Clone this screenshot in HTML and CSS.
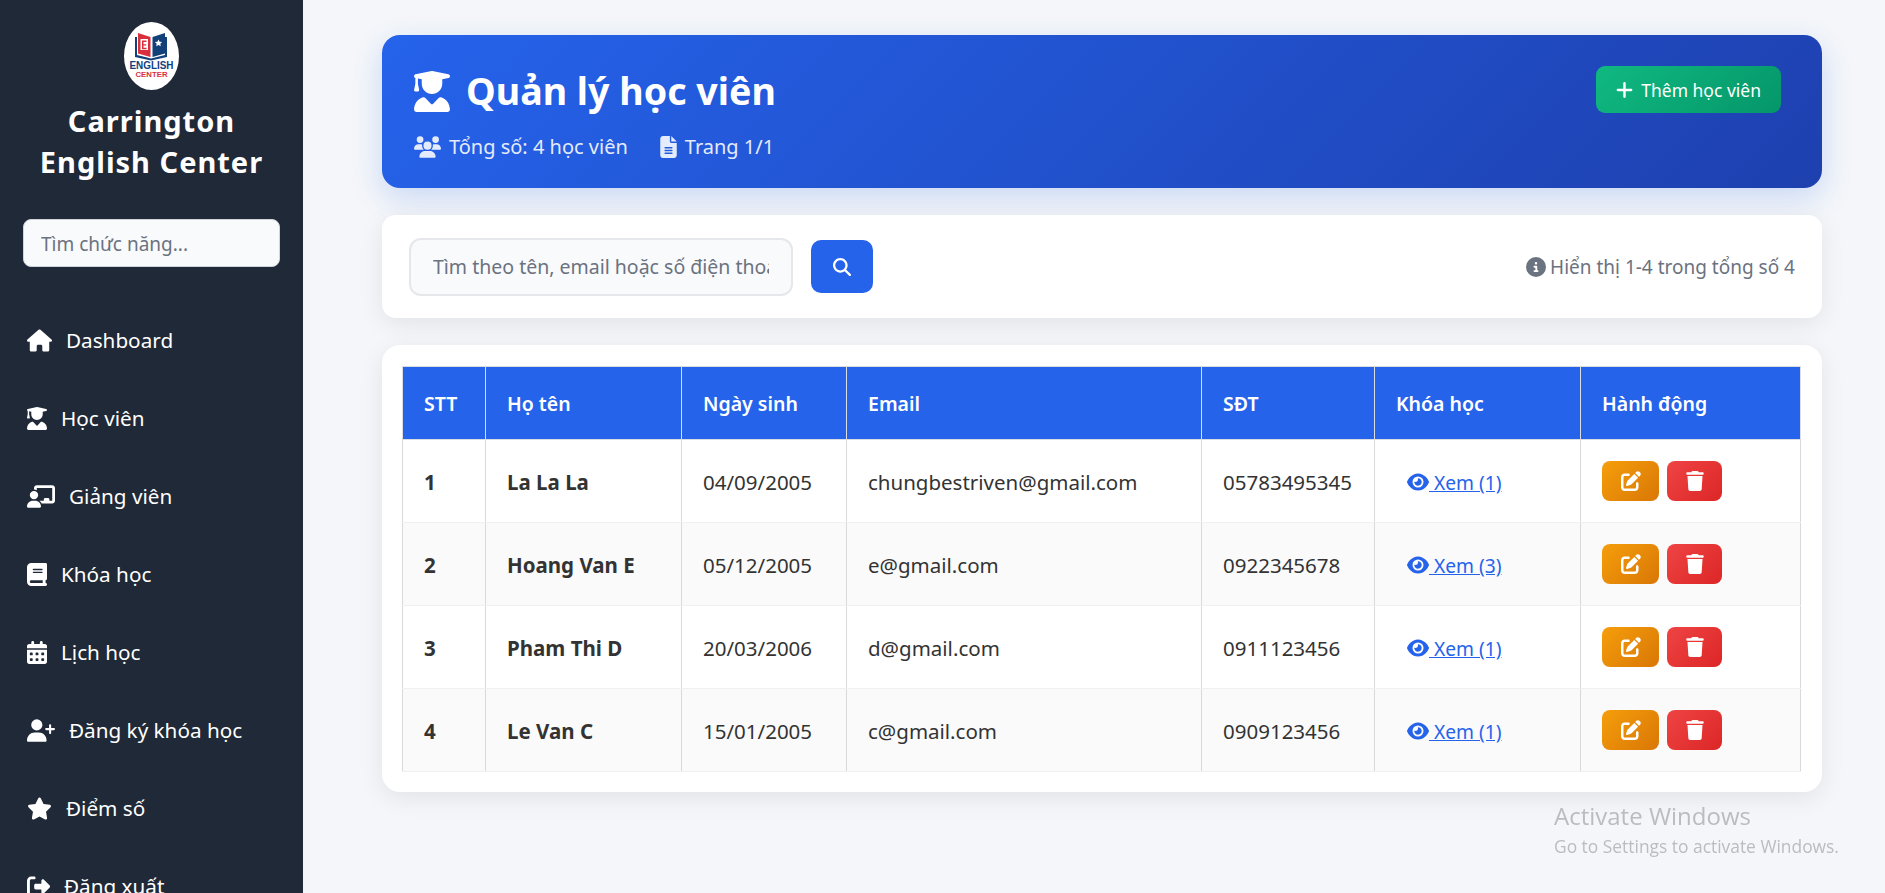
FILE: index.html
```html
<!DOCTYPE html>
<html lang="vi">
<head>
  <meta charset="UTF-8" />
  <title>Quản lý học viên</title>
  <link rel="stylesheet" href="styles.css">
</head>
<body>
  <svg class="icon-defs">
    <symbol id="i-home" viewBox="0 0 576 512"><path d="M575.8 255.5c0 18-15 32.100-32 32.100h-32l.7 160.200c0 2.700-.2 5.400-.5 8.100V472c0 22.100-17.900 40-40 40H456c-1.100 0-2.200 0-3.300-.1c-1.400 .1-2.800 .1-4.200 .1H416 392c-22.100 0-40-17.900-40-40V448 384c0-17.700-14.300-32-32-32H256c-17.700 0-32 14.300-32 32v64 24c0 22.100-17.900 40-40 40H160 128.100c-1.500 0-3-.1-4.500-.2c-1.200 .1-2.400 .2-3.600 .2H104c-22.100 0-40-17.900-40-40V360c0-.9 0-1.900 .1-2.800V287.600H32c-18 0-32-14-32-32.100c0-9 3-17 10-24L266.400 8c7-7 15-8 22-8s15 2 21 7L564.800 231.500c8 7 12 15 11 24z"/></symbol>
    <symbol id="i-grad" viewBox="0 0 448 512"><path d="M219.300 .5c3.100-.6 6.300-.6 9.400 0l200 40C439.900 42.700 448 52.600 448 64s-8.100 21.300-19.300 23.500L352 102.900V160c0 70.700-57.300 128-128 128s-128-57.300-128-128V102.900L48 93.300v65.100l15.700 78.400c.9 4.700-.3 9.600-3.300 13.300s-7.600 5.900-12.400 5.900H16c-4.800 0-9.300-2.100-12.400-5.900s-4.300-8.600-3.300-13.300L16 158.400V86.600C6.500 83.300 0 74.300 0 64C0 52.600 8.100 42.700 19.300 40.500l200-40zM111.900 327.700c10.500-3.400 21.800 .4 29.400 8.500l71 75.500c6.300 6.700 17 6.700 23.300 0l71-75.500c7.600-8.100 18.900-11.900 29.400-8.500C401 348.600 448 409.400 448 481.300c0 17-13.800 30.700-30.700 30.700H30.700C13.800 512 0 498.200 0 481.300c0-71.900 47-132.700 111.900-153.600z"/></symbol>
    <symbol id="i-teacher" viewBox="0 0 640 512"><path d="M160 64c0-35.300 28.700-64 64-64H576c35.300 0 64 28.700 64 64V352c0 35.300-28.700 64-64 64H336.800c-11.800-25.500-29.900-47.500-52.400-64H384V320c0-17.700 14.300-32 32-32h64c17.700 0 32 14.300 32 32v32h64V64L224 64v49.100C205.200 102.200 183.300 96 160 96V64zm0 64a96 96 0 1 1 0 192 96 96 0 1 1 0-192zM133.300 352h53.300C260.300 352 320 411.700 320 485.300c0 14.700-11.900 26.700-26.700 26.700H26.700C11.900 512 0 500.100 0 485.300C0 411.700 59.700 352 133.300 352z"/></symbol>
    <symbol id="i-book" viewBox="0 0 448 512"><path d="M96 0C43 0 0 43 0 96V416c0 53 43 96 96 96H384h32c17.700 0 32-14.300 32-32s-14.300-32-32-32V384c17.700 0 32-14.300 32-32V32c0-17.700-14.300-32-32-32H384 96zm0 384H352v64H96c-17.700 0-32-14.300-32-32s14.300-32 32-32zm32-240c0-8.800 7.200-16 16-16H336c8.800 0 16 7.200 16 16s-7.200 16-16 16H144c-8.800 0-16-7.200-16-16zm16 48H336c8.800 0 16 7.200 16 16s-7.200 16-16 16H144c-8.800 0-16-7.200-16-16s7.200-16 16-16z"/></symbol>
    <symbol id="i-calendar" viewBox="0 0 448 512"><path d="M128 0c17.700 0 32 14.300 32 32V64H288V32c0-17.700 14.300-32 32-32s32 14.300 32 32V64h48c26.500 0 48 21.500 48 48v48H0V112C0 85.500 21.500 64 48 64H96V32c0-17.700 14.300-32 32-32zM0 192H448V464c0 26.500-21.500 48-48 48H48c-26.500 0-48-21.500-48-48V192zm64 80v32c0 8.800 7.200 16 16 16h32c8.800 0 16-7.200 16-16V272c0-8.800-7.200-16-16-16H80c-8.800 0-16 7.200-16 16zm128 0v32c0 8.800 7.200 16 16 16h32c8.800 0 16-7.200 16-16V272c0-8.800-7.200-16-16-16H208c-8.800 0-16 7.200-16 16zm144-16c-8.800 0-16 7.200-16 16v32c0 8.800 7.200 16 16 16h32c8.800 0 16-7.200 16-16V272c0-8.800-7.200-16-16-16H336zM64 400v32c0 8.800 7.200 16 16 16h32c8.800 0 16-7.200 16-16V400c0-8.800-7.200-16-16-16H80c-8.800 0-16 7.200-16 16zm144-16c-8.800 0-16 7.200-16 16v32c0 8.800 7.200 16 16 16h32c8.800 0 16-7.200 16-16V400c0-8.800-7.200-16-16-16H208zm112 16v32c0 8.800 7.200 16 16 16h32c8.800 0 16-7.200 16-16V400c0-8.800-7.200-16-16-16H336c-8.800 0-16 7.200-16 16z"/></symbol>
    <symbol id="i-user-plus" viewBox="0 0 640 512"><path d="M96 128a128 128 0 1 1 256 0A128 128 0 1 1 96 128zM0 482.300C0 383.800 79.800 304 178.300 304h91.400C368.200 304 448 383.800 448 482.300c0 16.400-13.300 29.700-29.700 29.700H29.700C13.300 512 0 498.700 0 482.300zM504 312V248H440c-13.300 0-24-10.700-24-24s10.700-24 24-24h64V136c0-13.300 10.700-24 24-24s24 10.700 24 24v64h64c13.300 0 24 10.700 24 24s-10.700 24-24 24H552v64c0 13.300-10.700 24-24 24s-24-10.700-24-24z"/></symbol>
    <symbol id="i-star" viewBox="0 0 576 512"><path d="M316.900 18C311.600 7 300.400 0 288.100 0s-23.400 7-28.800 18L195 150.300 51.400 171.500c-12 1.800-22 10.200-25.700 21.700s-.7 24.200 7.900 32.700L137.800 329 113.200 474.700c-2 12 3 24.200 12.900 31.300s23 8 33.800 2.300l128.300-68.500 128.300 68.500c10.800 5.700 23.900 4.900 33.800-2.300s14.900-19.300 12.900-31.300L438.500 329 542.700 225.900c8.600-8.500 11.700-21.200 7.900-32.700s-13.700-19.900-25.700-21.700L381.200 150.300 316.900 18z"/></symbol>
    <symbol id="i-logout" viewBox="0 0 512 512"><path d="M377.900 105.900L500.700 228.700c7.200 7.200 11.300 17.100 11.300 27.300s-4.100 20.100-11.300 27.300L377.900 406.100c-6.400 6.400-15 9.900-24 9.900c-18.700 0-33.900-15.200-33.900-33.900l0-62.100-128 0c-17.700 0-32-14.300-32-32l0-64c0-17.700 14.300-32 32-32l128 0 0-62.100c0-18.700 15.200-33.900 33.900-33.900c9 0 17.600 3.600 24 9.900zM160 96L96 96c-17.700 0-32 14.300-32 32l0 256c0 17.700 14.300 32 32 32l64 0c17.700 0 32 14.300 32 32s-14.300 32-32 32l-64 0c-53 0-96-43-96-96L0 128C0 75 43 32 96 32l64 0c17.700 0 32 14.300 32 32s-14.300 32-32 32z"/></symbol>
    <symbol id="i-users" viewBox="0 0 640 512"><path d="M144 0a80 80 0 1 1 0 160A80 80 0 1 1 144 0zM512 0a80 80 0 1 1 0 160A80 80 0 1 1 512 0zM0 298.700C0 239.800 47.800 192 106.700 192h42.700c15.900 0 31 3.500 44.600 9.700c-1.300 7.200-1.900 14.700-1.900 22.300c0 38.200 16.800 72.500 43.300 96c-.2 0-.4 0-.7 0H21.300C9.600 320 0 310.400 0 298.700zM405.300 320c-.2 0-.4 0-.7 0c26.600-23.500 43.300-57.800 43.300-96c0-7.600-.7-15-1.900-22.300c13.600-6.300 28.700-9.700 44.600-9.700h42.700C592.200 192 640 239.800 640 298.700c0 11.800-9.600 21.300-21.300 21.300H405.300zM224 224a96 96 0 1 1 192 0 96 96 0 1 1 -192 0zM128 485.300C128 411.700 187.700 352 261.300 352H378.700C452.300 352 512 411.700 512 485.300c0 14.700-11.900 26.700-26.700 26.700H154.700c-14.700 0-26.700-11.900-26.700-26.700z"/></symbol>
    <symbol id="i-file" viewBox="0 0 384 512"><path d="M64 0C28.700 0 0 28.700 0 64V448c0 35.300 28.700 64 64 64H320c35.300 0 64-28.700 64-64V160H256c-17.700 0-32-14.300-32-32V0H64zM256 0V128H384L256 0zM112 256H272c8.800 0 16 7.200 16 16s-7.200 16-16 16H112c-8.800 0-16-7.200-16-16s7.200-16 16-16zm0 64H272c8.800 0 16 7.200 16 16s-7.200 16-16 16H112c-8.800 0-16-7.200-16-16s7.200-16 16-16zm0 64H272c8.800 0 16 7.200 16 16s-7.200 16-16 16H112c-8.800 0-16-7.200-16-16s7.200-16 16-16z"/></symbol>
    <symbol id="i-plus" viewBox="0 0 448 512"><path d="M256 80c0-17.700-14.300-32-32-32s-32 14.300-32 32V224H48c-17.700 0-32 14.300-32 32s14.300 32 32 32H192V432c0 17.700 14.300 32 32 32s32-14.300 32-32V288H400c17.700 0 32-14.300 32-32s-14.300-32-32-32H256V80z"/></symbol>
    <symbol id="i-search" viewBox="0 0 512 512"><path d="M416 208c0 45.900-14.900 88.300-40 122.700L502.600 457.400c12.500 12.500 12.500 32.800 0 45.300s-32.800 12.500-45.300 0L330.700 376c-34.400 25.200-76.800 40-122.700 40C93.100 416 0 322.900 0 208S93.100 0 208 0S416 93.100 416 208zM208 352a144 144 0 1 0 0-288 144 144 0 1 0 0 288z"/></symbol>
    <symbol id="i-info" viewBox="0 0 512 512"><path d="M256 512A256 256 0 1 0 256 0a256 256 0 1 0 0 512zM216 336h24V272H216c-13.300 0-24-10.700-24-24s10.700-24 24-24h48c13.300 0 24 10.700 24 24v88h8c13.300 0 24 10.700 24 24s-10.700 24-24 24H216c-13.300 0-24-10.700-24-24s10.700-24 24-24zm40-208a32 32 0 1 1 0 64 32 32 0 1 1 0-64z"/></symbol>
    <symbol id="i-eye" viewBox="0 0 576 512"><path d="M288 32c-80.800 0-145.500 36.800-192.600 80.600C48.600 156 17.300 208 2.500 243.700c-3.300 7.900-3.300 16.700 0 24.600C17.300 304 48.600 356 95.400 399.400C142.500 443.200 207.200 480 288 480s145.500-36.800 192.600-80.600c46.800-43.500 78.100-95.400 93-131.100c3.300-7.900 3.300-16.700 0-24.600c-14.900-35.700-46.200-87.700-93-131.100C433.500 68.800 368.800 32 288 32zM144 256a144 144 0 1 1 288 0 144 144 0 1 1 -288 0zm144-64c0 35.300-28.700 64-64 64c-7.100 0-13.900-1.200-20.300-3.300c-5.500-1.800-11.900 1.600-11.700 7.400c.3 6.900 1.300 13.800 3.200 20.700c13.700 51.200 66.400 81.600 117.600 67.900s81.600-66.400 67.900-117.600c-11.100-41.500-47.800-69.400-88.600-71.100c-5.800-.2-9.200 6.100-7.400 11.700c2.100 6.400 3.300 13.200 3.300 20.300z"/></symbol>
    <symbol id="i-edit" viewBox="0 0 512 512"><path d="M471.600 21.700c-21.900-21.900-57.300-21.900-79.200 0L362.300 51.700l97.900 97.900 30.100-30.100c21.900-21.900 21.900-57.300 0-79.200L471.600 21.700zm-299.200 220c-6.100 6.100-10.800 13.600-13.500 21.900l-29.600 88.800c-2.900 8.600-.6 18.100 5.800 24.600s15.900 8.700 24.600 5.800l88.800-29.600c8.200-2.700 15.700-7.400 21.900-13.500L437.700 172.300 339.700 74.300 172.400 241.700zM96 64C43 64 0 107 0 160V416c0 53 43 96 96 96H352c53 0 96-43 96-96V320c0-17.700-14.300-32-32-32s-32 14.300-32 32v96c0 17.700-14.300 32-32 32H96c-17.700 0-32-14.300-32-32V160c0-17.700 14.300-32 32-32h96c17.700 0 32-14.300 32-32s-14.300-32-32-32H96z"/></symbol>
    <symbol id="i-trash" viewBox="0 0 448 512"><path d="M135.200 17.700L128 32H32C14.300 32 0 46.300 0 64S14.300 96 32 96H416c17.700 0 32-14.300 32-32s-14.300-32-32-32H320l-7.200-14.300C307.400 6.800 296.300 0 284.200 0H163.800c-12.100 0-23.200 6.800-28.600 17.700zM416 128H32L53.200 467c1.600 25.300 22.600 45 47.900 45H346.900c25.300 0 46.300-19.700 47.900-45L416 128z"/></symbol>
  </svg>

  <aside class="sidebar">
    <div class="brand">
      <svg class="logo" viewBox="0 0 55 68">
        <ellipse cx="27.500" cy="34" rx="27.500" ry="34" fill="#fff"/>
        <path d="M11 15h2v18l14 3.500L41 33V15h2v20l-16 3.500L11 35z" fill="#12417a"/>
        <path d="M14 11l12.500 4v20L14 31.500z" fill="#d9303e"/>
        <path d="M41 11l-12.500 4v20L41 31.500z" fill="#12417a"/>
        <rect x="16.500" y="17" width="7.500" height="11" fill="#fff"/>
        <path d="M18 18.500h4.500v1.500h-3v2.200h2.700v1.400h-2.700v2.200h3v1.400H18z" fill="#d9303e"/>
        <path d="M34.500 17.500l1.100 2.300 2.500.3-1.800 1.700.5 2.500-2.300-1.200-2.300 1.200.5-2.500-1.800-1.700 2.500-.3z" fill="#fff"/>
        <text class="logo-line1" x="27.500" y="46.500" text-anchor="middle" textLength="44" lengthAdjust="spacingAndGlyphs">ENGLISH</text>
        <text class="logo-line2" x="27.500" y="55" text-anchor="middle" textLength="32" lengthAdjust="spacingAndGlyphs">CENTER</text>
      </svg>
      <h2 class="brand-name">Carrington<br>English Center</h2>
    </div>
    <input class="side-search" type="text" placeholder="Tìm chức năng...">
    <nav class="side-nav">
      <a class="nav-item" href="#"><svg class="nav-icon"><use href="#i-home"/></svg>Dashboard</a>
      <a class="nav-item" href="#"><svg class="nav-icon narrow"><use href="#i-grad"/></svg>Học viên</a>
      <a class="nav-item" href="#"><svg class="nav-icon wide"><use href="#i-teacher"/></svg>Giảng viên</a>
      <a class="nav-item" href="#"><svg class="nav-icon narrow"><use href="#i-book"/></svg>Khóa học</a>
      <a class="nav-item" href="#"><svg class="nav-icon narrow"><use href="#i-calendar"/></svg>Lịch học</a>
      <a class="nav-item" href="#"><svg class="nav-icon wide"><use href="#i-user-plus"/></svg>Đăng ký khóa học</a>
      <a class="nav-item" href="#"><svg class="nav-icon"><use href="#i-star"/></svg>Điểm số</a>
      <a class="nav-item" href="#"><svg class="nav-icon square"><use href="#i-logout"/></svg>Đăng xuất</a>
    </nav>
  </aside>

  <main class="content">
    <header class="page-head">
      <div>
        <h1 class="page-title"><svg class="title-icon"><use href="#i-grad"/></svg>Quản lý học viên</h1>
        <div class="page-meta">
          <span class="meta-item"><svg class="meta-users"><use href="#i-users"/></svg>Tổng số: 4 học viên</span>
          <span class="meta-item"><svg class="meta-file"><use href="#i-file"/></svg>Trang 1/1</span>
        </div>
      </div>
      <a class="btn-add" href="#"><svg class="plus-icon"><use href="#i-plus"/></svg>Thêm học viên</a>
    </header>

    <section class="search-card">
      <form class="search-form">
        <input class="search-input" type="text" placeholder="Tìm theo tên, email hoặc số điện thoại...">
        <button class="search-btn" type="button"><svg class="search-icon"><use href="#i-search"/></svg></button>
      </form>
      <div class="result-info"><svg class="info-icon"><use href="#i-info"/></svg>Hiển thị 1-4 trong tổng số 4</div>
    </section>

    <section class="table-card">
      <table class="students">
        <colgroup>
          <col class="col-stt"><col class="col-name"><col class="col-dob"><col class="col-email"><col class="col-phone"><col class="col-course"><col class="col-action">
        </colgroup>
        <thead>
          <tr><th>STT</th><th>Họ tên</th><th>Ngày sinh</th><th>Email</th><th>SĐT</th><th>Khóa học</th><th>Hành động</th></tr>
        </thead>
        <tbody>
          <tr>
            <td class="strong">1</td><td class="strong">La La La</td><td>04/09/2005</td><td>chungbestriven@gmail.com</td><td>05783495345</td>
            <td><a class="view-link" href="#"><svg class="eye-icon"><use href="#i-eye"/></svg> Xem (1)</a></td>
            <td><div class="actions"><a class="btn-edit" href="#"><svg class="act-icon"><use href="#i-edit"/></svg></a><a class="btn-del" href="#"><svg class="act-icon"><use href="#i-trash"/></svg></a></div></td>
          </tr>
          <tr>
            <td class="strong">2</td><td class="strong">Hoang Van E</td><td>05/12/2005</td><td>e@gmail.com</td><td>0922345678</td>
            <td><a class="view-link" href="#"><svg class="eye-icon"><use href="#i-eye"/></svg> Xem (3)</a></td>
            <td><div class="actions"><a class="btn-edit" href="#"><svg class="act-icon"><use href="#i-edit"/></svg></a><a class="btn-del" href="#"><svg class="act-icon"><use href="#i-trash"/></svg></a></div></td>
          </tr>
          <tr>
            <td class="strong">3</td><td class="strong">Pham Thi D</td><td>20/03/2006</td><td>d@gmail.com</td><td>0911123456</td>
            <td><a class="view-link" href="#"><svg class="eye-icon"><use href="#i-eye"/></svg> Xem (1)</a></td>
            <td><div class="actions"><a class="btn-edit" href="#"><svg class="act-icon"><use href="#i-edit"/></svg></a><a class="btn-del" href="#"><svg class="act-icon"><use href="#i-trash"/></svg></a></div></td>
          </tr>
          <tr>
            <td class="strong">4</td><td class="strong">Le Van C</td><td>15/01/2005</td><td>c@gmail.com</td><td>0909123456</td>
            <td><a class="view-link" href="#"><svg class="eye-icon"><use href="#i-eye"/></svg> Xem (1)</a></td>
            <td><div class="actions"><a class="btn-edit" href="#"><svg class="act-icon"><use href="#i-edit"/></svg></a><a class="btn-del" href="#"><svg class="act-icon"><use href="#i-trash"/></svg></a></div></td>
          </tr>
        </tbody>
      </table>
    </section>
  </main>

  <div class="activate">
    <div class="activate-title">Activate Windows</div>
    <div class="activate-sub">Go to Settings to activate Windows.</div>
  </div>
</body>
</html>
```

FILE: styles.css
```css
* { box-sizing: border-box; }

html, body {
  height: 100%;
}

body {
  margin: 0;
  overflow: hidden;
  display: flex;
  background-color: #f4f6f9;
  color: #333;
  font-family: "Noto Sans", "Open Sans", sans-serif;
}

a { text-decoration: none; }

svg { fill: currentColor; flex: none; }

.icon-defs { display: none; }

/* sidebar */
.sidebar {
  width: 303px;
  height: 100%;
  flex: none;
  overflow: hidden;
  padding-top: 22px;
  background-color: #1f2937;
  color: #fff;
}

.brand {
  display: flex;
  flex-direction: column;
  align-items: center;
}

.logo {
  width: 55px;
  height: 68px;
}

.logo-line1 {
  font-family: "Liberation Sans", sans-serif;
  font-weight: 700;
  font-size: 11px;
  fill: #12417a;
}

.logo-line2 {
  font-family: "Liberation Sans", sans-serif;
  font-weight: 700;
  font-size: 8px;
  fill: #d9303e;
}

.brand-name {
  margin: 10px 0 0;
  font-size: 29px;
  line-height: 41px;
  font-weight: 700;
  letter-spacing: 1px;
  text-align: center;
}

.side-search {
  display: block;
  width: 257px;
  height: 48px;
  margin: 37px 0 0 23px;
  padding: 2px 17px 0;
  border: 1px solid #d1d5db;
  border-radius: 8px;
  background-color: #f9fafc;
  font: 19px "Noto Sans", sans-serif;
}

.side-search::placeholder { color: #6b7280; opacity: 1; }

.side-nav {
  margin-top: 34px;
  padding-left: 27px;
}

.nav-item {
  display: flex;
  align-items: center;
  gap: 14px;
  height: 78px;
  color: #fff;
  font-size: 20.7px;
}

.nav-icon { width: 25px; height: 23px; }
.nav-icon.narrow { width: 20px; }
.nav-icon.wide { width: 28px; }
.nav-icon.square { width: 23px; }

/* main */
.content {
  flex: 1;
  min-width: 0;
  padding: 35px 63px 0 79px;
}

.page-head {
  display: flex;
  justify-content: space-between;
  align-items: flex-start;
  height: 153px;
  padding: 31px 41px 0 32px;
  border-radius: 18px;
  background: linear-gradient(135deg, #2563eb, #1e40af);
  box-shadow: 0 10px 30px rgba(37, 99, 235, 0.2);
  color: #fff;
}

.page-title {
  display: flex;
  align-items: center;
  gap: 16px;
  margin: 0;
  font-size: 37.6px;
  line-height: 50px;
  font-weight: 700;
}

.title-icon { width: 36px; height: 41px; }

.page-meta {
  display: flex;
  gap: 32px;
  margin-top: 17px;
  font-size: 20px;
  color: #e4ebfc;
}

.meta-item {
  display: flex;
  align-items: center;
  gap: 8px;
}

.meta-users { width: 27px; height: 22px; }
.meta-file { width: 17px; height: 22px; }

.btn-add {
  display: flex;
  align-items: center;
  gap: 8px;
  height: 47px;
  padding: 0 20px;
  border-radius: 9px;
  background: linear-gradient(135deg, #10b981, #059669);
  color: #fff;
  font-size: 17.5px;
}

.plus-icon { width: 17px; height: 20px; }

.search-card {
  display: flex;
  justify-content: space-between;
  align-items: center;
  height: 103px;
  margin-top: 27px;
  padding: 0 27px;
  border-radius: 14px;
  background-color: #fff;
  box-shadow: 0 6px 24px rgba(0, 0, 0, 0.08);
}

.search-form {
  display: flex;
  align-items: center;
  gap: 18px;
}

.search-input {
  width: 384px;
  height: 58px;
  padding: 0 22px;
  border: 2px solid #e5e7eb;
  border-radius: 12px;
  background-color: #f9fafb;
  font: 19.5px "Noto Sans", sans-serif;
}

.search-input::placeholder { color: #6b7280; opacity: 1; }

.search-btn {
  display: flex;
  align-items: center;
  justify-content: center;
  width: 62px;
  height: 53px;
  padding: 0;
  border: 0;
  border-radius: 10px;
  background-color: #2563eb;
  color: #fff;
}

.search-icon { width: 18px; height: 18px; }

.result-info {
  display: flex;
  align-items: center;
  gap: 4px;
  color: #6b7280;
  font-size: 19px;
}

.info-icon { width: 20px; height: 20px; }

.table-card {
  height: 447px;
  margin-top: 27px;
  padding: 21px 21px 0 20px;
  border-radius: 18px;
  background-color: #fff;
  box-shadow: 0 6px 24px rgba(0, 0, 0, 0.08);
}

.students {
  width: 1398px;
  table-layout: fixed;
  border-collapse: collapse;
  font-size: 20.5px;
}

.col-stt { width: 83px; }
.col-name { width: 196px; }
.col-dob { width: 165px; }
.col-email { width: 355px; }
.col-phone { width: 173px; }
.col-course { width: 206px; }
.col-action { width: 220px; }

.students th {
  height: 73px;
  padding: 0 21px;
  border: 1px solid #d9dce1;
  background-color: #2563eb;
  color: #fff;
  font-size: 19.5px;
  font-weight: 600;
  text-align: left;
}

.students td {
  height: 83px;
  padding: 2px 21px 0;
  border-left: 1px solid #d9d9d9;
  border-right: 1px solid #d9d9d9;
  border-bottom: 1px solid #f0f0f0;
  white-space: nowrap;
}

.students tbody tr:nth-child(even) { background-color: #fafafa; }

.students .strong { font-weight: 700; }

.view-link {
  padding-left: 11px;
  color: #2563eb;
  font-size: 19.2px;
  text-decoration: underline;
}

.eye-icon {
  width: 22px;
  height: 20px;
  vertical-align: -2px;
}

.actions {
  display: flex;
  gap: 8px;
  margin-bottom: 3px;
}

.btn-edit, .btn-del {
  display: flex;
  align-items: center;
  justify-content: center;
  height: 40px;
  border-radius: 8px;
  color: #fff;
}

.btn-edit {
  width: 57px;
  background: linear-gradient(135deg, #f59e0b, #d97706);
}

.btn-del {
  width: 55px;
  background: linear-gradient(135deg, #ef4444, #dc2626);
}

.act-icon { width: 20px; height: 20px; }

/* windows watermark, sits over the page */
.activate {
  position: fixed;
  left: 1554px;
  top: 799px;
  color: #bbbcbf;
  font-family: "Open Sans", sans-serif;
  pointer-events: none;
}

.activate-title { font-size: 24px; line-height: 34px; }
.activate-sub { font-size: 17.4px; line-height: 26px; }
```
